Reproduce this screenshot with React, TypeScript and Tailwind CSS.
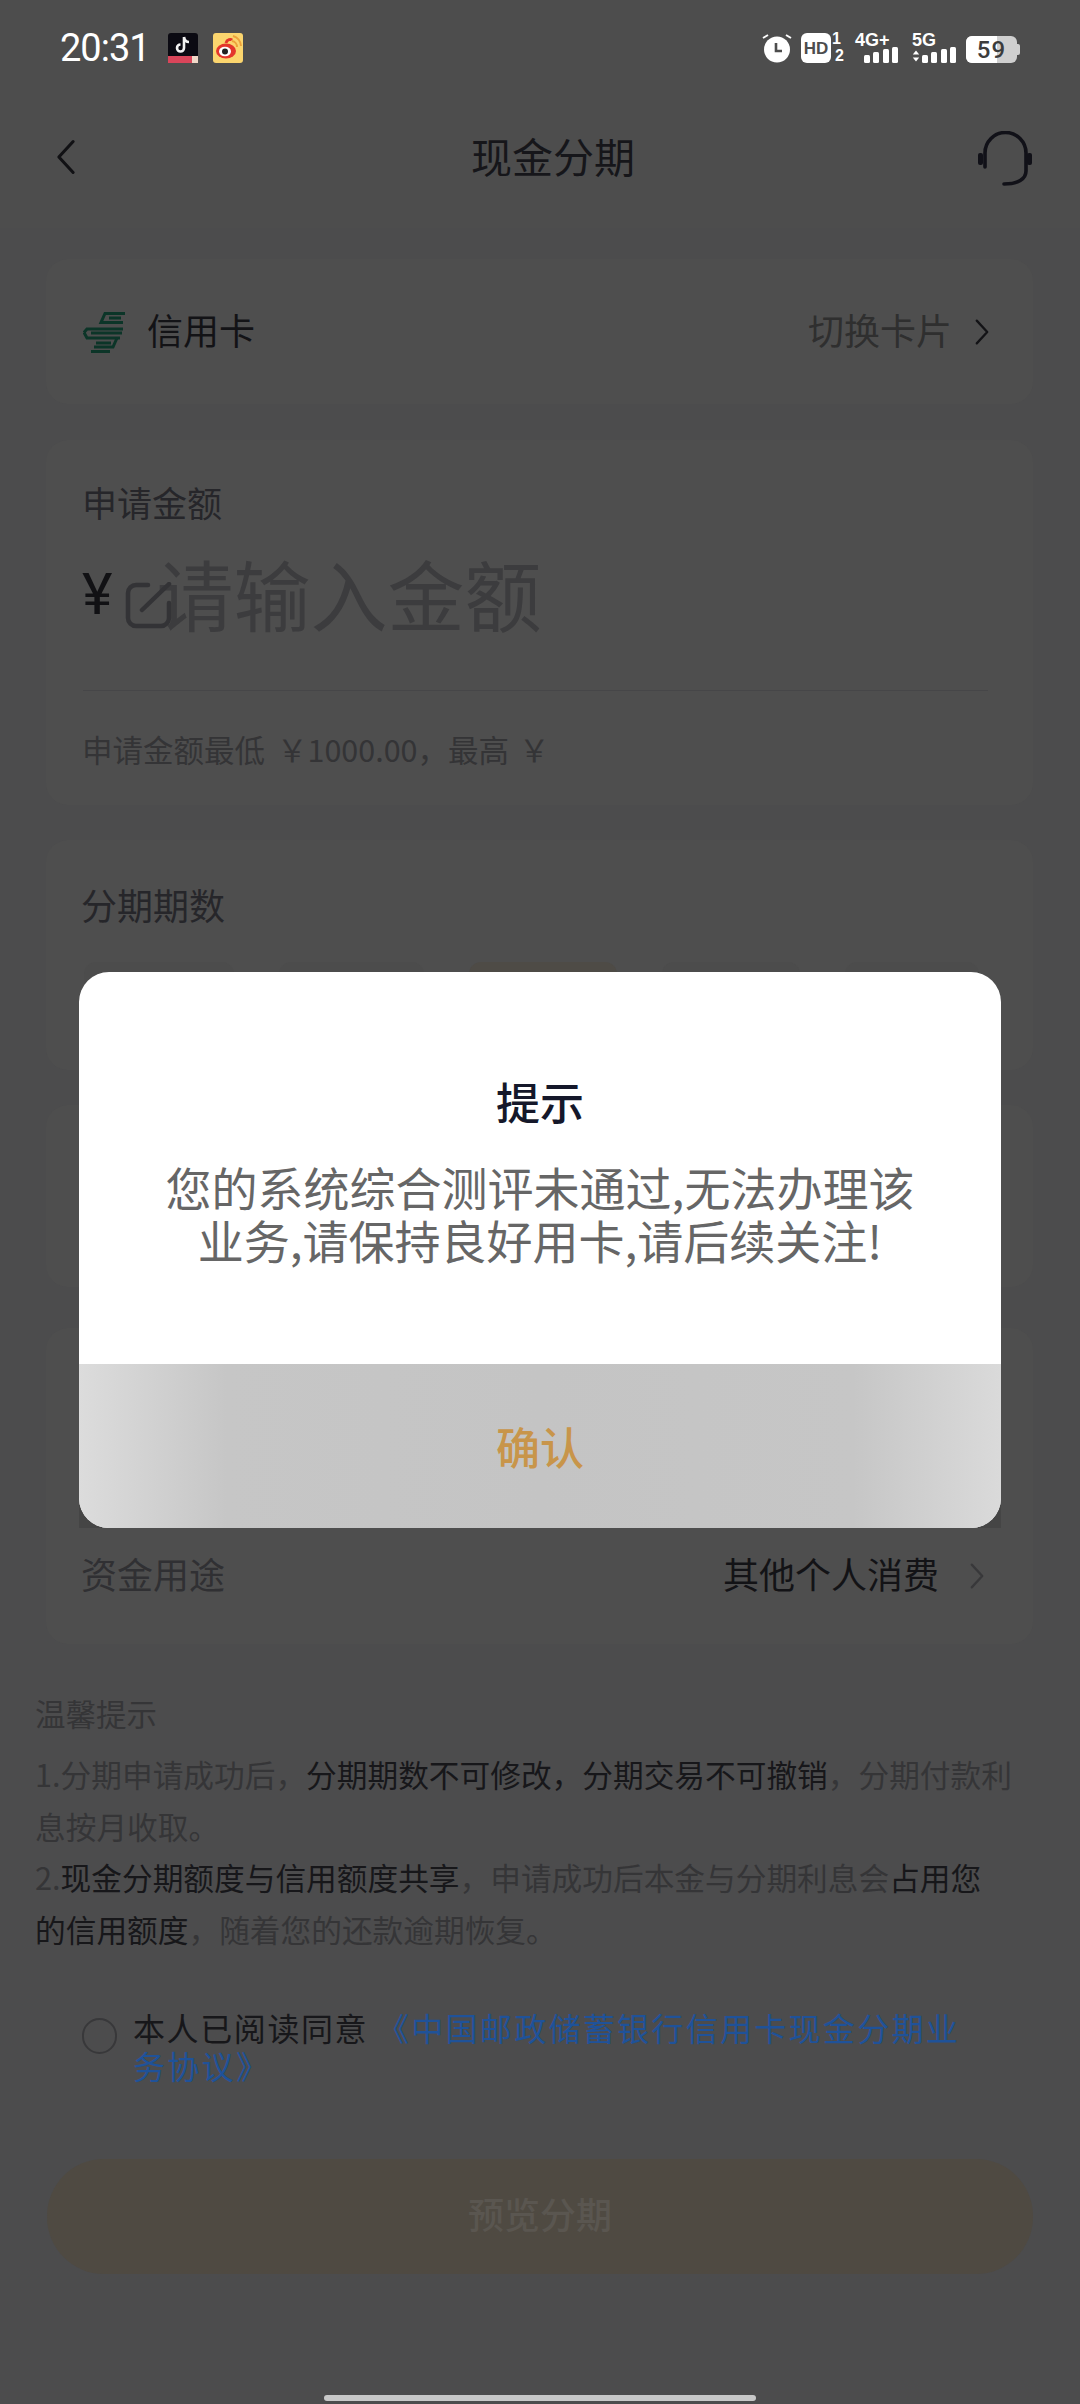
const cjk = "font-['Noto_Sans_CJK_SC','Noto_Sans',sans-serif]";

const Chevron = ({ className, left }: { className: string; left?: boolean }) => (
  <svg viewBox="0 0 18 32" fill="none" className={className}>
    <path d={left ? "M15 3L3 16l12 13" : "M3 3l12 13L3 29"} stroke="currentColor" strokeWidth="2.6" strokeLinecap="round" strokeLinejoin="round" />
  </svg>
);

const Bars = ({ className }: { className: string }) => (
  <div className={`flex items-end gap-[3.5px] ${className}`}>
    <span className="h-[8px] w-[6px] rounded-[1.5px] bg-white" />
    <span className="h-[11px] w-[6px] rounded-[1.5px] bg-white" />
    <span className="h-[14px] w-[6px] rounded-[1.5px] bg-white" />
    <span className="h-[16px] w-[6px] rounded-[1.5px] bg-white" />
  </div>
);

const StatusBar = () => (
  <div className="flex items-center justify-between pl-[60px] pr-[60px] pt-[33px]">
    <div className="flex h-[30px] items-center">
      <span className="w-[89px] font-['Roboto',sans-serif] text-[38px] leading-[40px] tracking-[-1px] text-white">20:31</span>
      <svg viewBox="0 0 30 30" className="ml-[19px] h-[30px] w-[30px]">
        <rect width="30" height="30" rx="3" fill="#0b0a12" />
        <rect y="23" width="30" height="7" fill="#d9455a" />
        <rect x="24" y="23" width="6" height="7" fill="#f0d8c8" />
        <path d="M16 4v11a3.5 3.5 0 1 1-3.5-3.5M16 4c.5 3 2.4 5 5 5" fill="none" stroke="#f2f2f2" strokeWidth="2.6" />
      </svg>
      <svg viewBox="0 0 30 30" className="ml-[15px] h-[30px] w-[30px]">
        <rect width="30" height="30" rx="3" fill="#fbd56e" />
        <ellipse cx="13" cy="18" rx="10" ry="7.5" fill="#e3362c" />
        <path d="M13 10c1-4 5-4 6-3" fill="none" stroke="#e3362c" strokeWidth="3" />
        <ellipse cx="12" cy="18.5" rx="6" ry="4.8" fill="#fff" />
        <circle cx="12" cy="18.5" r="3" fill="#222" />
        <path d="M19 8a6 6 0 0 1 5 6M20 3a11 11 0 0 1 8 10" fill="none" stroke="#eda23a" strokeWidth="2" />
      </svg>
    </div>
    <div className="flex h-[30px] items-end">
      <svg viewBox="0 0 30 30" className="h-[30px] w-[30px]">
        <circle cx="15" cy="16.5" r="13" fill="#fff" />
        <path d="M1 5l5-3M29 5l-5-3" stroke="#fff" strokeWidth="2" />
        <path d="M14 10v8h6" fill="none" stroke="#4d4d4d" strokeWidth="2.6" />
      </svg>
      <div className="relative ml-[9px] h-[30px] w-[42px]">
        <div className="flex h-[30px] w-[30px] items-center justify-center rounded-[6px] bg-white font-['Liberation_Sans',sans-serif] text-[17px] font-bold leading-none text-[#4d4d4d]">HD</div>
        <span className="absolute right-[2px] top-[-2px] font-['Liberation_Sans',sans-serif] text-[16px] font-bold leading-[16px] text-white">1</span>
        <span className="absolute bottom-[-1px] right-[-1px] font-['Liberation_Sans',sans-serif] text-[16px] font-bold leading-[16px] text-white">2</span>
      </div>
      <div className="relative ml-[12px] h-[30px] w-[43px]">
        <span className="absolute left-0 top-[-2px] whitespace-nowrap font-['Liberation_Sans',sans-serif] text-[18px] font-bold leading-[18px] text-white">4G+</span>
        <Bars className="absolute bottom-0 right-0" />
      </div>
      <div className="relative ml-[14px] h-[30px] w-[44px]">
        <span className="absolute left-0 top-[-2px] font-['Liberation_Sans',sans-serif] text-[18px] font-bold leading-[18px] text-white">5G</span>
        <svg viewBox="0 0 10 14" className="absolute bottom-0 left-0 h-[14px] w-[8px]">
          <path d="M5 0l4 5H1zM5 14l4-5H1z" fill="#fff" />
        </svg>
        <Bars className="absolute bottom-0 right-0" />
      </div>
      <div className="relative ml-[10px] flex h-[27px] w-[51px] items-center justify-center overflow-hidden rounded-[6px] bg-[#cfcfcf]">
        <div className="absolute inset-y-0 left-0 w-[31px] bg-white" />
        <span className="relative font-['Roboto',sans-serif] text-[24px] font-medium leading-none tracking-[1px] text-[#3c3c3c]">59</span>
      </div>
      <div className="mb-[8px] h-[11px] w-[3px] rounded-r-[2px] bg-[#cfcfcf]" />
    </div>
  </div>
);

const Card = ({ className, children }: { className: string; children?: React.ReactNode }) => (
  <div className={`ml-[46px] w-[987px] rounded-[22px] bg-[#4e4e4e] ${className}`}>{children}</div>
);

export default function App() {
  return (
    <div className={`relative h-[2404px] w-[1080px] overflow-hidden bg-[#4c4c4d] ${cjk}`}>
      <div className="h-[228px] bg-[#4d4d4d]">
        <StatusBar />
        {/* nav */}
        <div className="relative mt-[61px] flex h-[66px] items-center justify-center">
          <Chevron left className="absolute left-[55px] h-[38px] w-[22px] text-[#111114]" />
          <span className="mb-[5px] ml-[26px] text-[41px] leading-[50px] text-[#16161a]">现金分期</span>
          <svg viewBox="0 0 54 55" fill="none" className="absolute left-[978px] top-[7px] h-[55px] w-[54px]">
            <path d="M7 36V22a20.5 20.5 0 0 1 41 0v18c0 8-8 13-22 13" stroke="#111118" strokeWidth="3.6" strokeLinecap="round" />
            <rect x="0" y="22" width="5" height="12" rx="2" fill="#111118" />
            <rect x="49" y="22" width="5" height="12" rx="2" fill="#111118" />
          </svg>
        </div>
      </div>

      {/* 信用卡 */}
      <Card className="mt-[31px] flex h-[145px] items-center justify-between pl-[37px] pr-[43px]">
        <div className="flex items-center">
          <svg viewBox="0 0 43 42" fill="none" className="h-[42px] w-[43px]" stroke="#0c3528" strokeWidth="3">
            <path d="M42 2.5H22L18 11.5H40" />
            <path d="M38 7H26" />
            <path d="M1 21.5L4 18H40" />
            <path d="M1 21.5L4 27H37" />
            <path d="M39 22H8" />
            <path d="M34 27L30 36H11" />
            <path d="M28 32H13" />
            <path d="M8 40.5H27" />
          </svg>
          <span className="mb-[5px] ml-[21px] text-[36px] leading-[46px] text-[#131316]">信用卡</span>
        </div>
        <div className="flex items-center">
          <span className="mb-[5px] text-[36px] leading-[46px] text-[#2f2f2f]">切换卡片</span>
          <Chevron className="ml-[22px] h-[28px] w-[16px] text-[#131316]" />
        </div>
      </Card>

      {/* 申请金额 */}
      <Card className="mt-[36px] h-[365px] px-[36px] pt-[39px]">
        <div className="text-[35px] leading-[46px] text-[#26262a]">申请金额</div>
        <div className="relative mt-[26px] flex h-[84px] items-center">
          <span className="mt-[2px] font-['Roboto',sans-serif] text-[58px] leading-none text-[#111114]">¥</span>
          <svg viewBox="0 0 47 47" fill="none" className="absolute left-[43px] top-[31px] h-[47px] w-[47px] text-[#333336]">
            <path d="M23 3H11a8 8 0 0 0-8 8v25a8 8 0 0 0 8 8h25a8 8 0 0 0 8-8V21" stroke="currentColor" strokeWidth="4.5" strokeLinecap="round" />
            <path d="M17 28L44 2" stroke="currentColor" strokeWidth="4.5" strokeLinecap="round" />
          </svg>
          <span className="ml-[44px] text-[77px] leading-[84px] text-[#3c3c3e]">请输入金额</span>
        </div>
        <div className="mt-[55px] ml-[1px] h-px w-[905px] bg-[#464648]" />
        <div className="mt-[36px] flex items-center whitespace-nowrap text-[30.5px] leading-[44px] text-[#343436]">
          <span>申请金额最低</span>
          <span className="ml-[12px]">￥1000.00，</span>
          <span>最高</span>
          <span className="ml-[10px]">￥</span>
        </div>
      </Card>

      {/* 分期期数 */}
      <Card className="mt-[35px] h-[230px] px-[35px] pt-[41px]">
        <div className="text-[36px] leading-[46px] text-[#26262a]">分期期数</div>
        <div className="mt-[35px] flex gap-[45px] pl-[3px]">
          <span className="h-[60px] w-[150px] rounded-[12px] bg-[#4c4c4c]" />
          <span className="h-[60px] w-[145px] rounded-[12px] bg-[#4c4c4c]" />
          <span className="h-[60px] w-[148px] rounded-[12px] bg-[#4e4b46]" />
          <span className="h-[60px] w-[138px] rounded-[12px] bg-[#4c4c4c]" />
          <span className="h-[60px] w-[134px] rounded-[12px] bg-[#4c4c4c]" />
        </div>
      </Card>

      {/* 弹窗后面的卡片 */}
      <Card className="mt-[35px] h-[182px]" />

      {/* 资金用途 */}
      <Card className="mt-[41px] flex h-[316px] items-end justify-between pb-[48px] pl-[35px] pr-[48px]">
        <span className="text-[36px] leading-[46px] text-[#303033]">资金用途</span>
        <div className="flex items-center">
          <span className="text-[36px] leading-[46px] text-[#131316]">其他个人消费</span>
          <Chevron className="ml-[30px] mt-[5px] h-[28px] w-[16px] text-[#38383a]" />
        </div>
      </Card>

      {/* 温馨提示 */}
      <div className="mt-[49px] pl-[35px]">
        <div className="text-[30.5px] leading-[40px] text-[#353537]">温馨提示</div>
        <div className="mt-[15px] whitespace-nowrap text-[30.7px] leading-[51.7px] text-[#353537]">
          <div>
            1.分期申请成功后，<span className="text-[#17171a]">分期期数不可修改，分期交易不可撤销</span>，分期付款利
            <br />
            息按月收取。
          </div>
          <div>
            2.<span className="text-[#17171a]">现金分期额度与信用额度共享</span>，申请成功后本金与分期利息会<span className="text-[#17171a]">占用您</span>
            <br />
            <span className="text-[#17171a]">的信用额度</span>，随着您的还款逾期恢复。
          </div>
        </div>
      </div>

      {/* 协议 */}
      <div className="mt-[53px] flex pl-[82px]">
        <span className="mt-[10px] h-[36px] w-[35px] shrink-0 rounded-full border-2 border-[#38383a]" />
        <div className="ml-[16px] whitespace-nowrap text-[32px] leading-[38px] tracking-[1.6px] text-[#17171a]">
          本人已阅读同意 <span className="tracking-[2.3px] text-[#1f5299]">《中国邮政储蓄银行信用卡现金分期业
            <br />
            务协议》</span>
        </div>
      </div>

      <div className="ml-[47px] mt-[75px] flex h-[115px] w-[986px] items-center justify-center rounded-[57px] bg-[#4f4a42]">
        <span className="mb-[7px] text-[36px] font-medium leading-[44px] text-[#5a5650]">预览分期</span>
      </div>

      {/* home indicator */}
      <div className="absolute bottom-[3px] left-[324px] h-[6px] w-[432px] rounded-full bg-[#c8c8c8]" />

      {/* 弹窗 */}
      <div className="absolute left-[79px] top-[972px] w-[922px] rounded-t-[30px] bg-[#454545]">
        <div className="overflow-hidden rounded-[30px] bg-white">
          <div className="flex h-[392px] flex-col items-center pt-[101px]">
            <div className="text-[44px] font-medium leading-[56px] text-[#15182a]">提示</div>
            <div className="mt-[31px] w-[770px] text-center text-[46px] leading-[53px] text-[#666666]">
              您的系统综合测评未通过,无法办理该
              <br />
              业务,请保持良好用卡,请后续关注!
            </div>
          </div>
          <div className="flex h-[164px] items-center justify-center bg-[linear-gradient(to_right,#dcdcdc,#c6c6c6_16%,#c4c4c4_50%,#c6c6c6_84%,#dadada)]">
            <span className="text-[44px] font-medium leading-[56px] text-[#c8954a]">确认</span>
          </div>
        </div>
      </div>
    </div>
  );
}
